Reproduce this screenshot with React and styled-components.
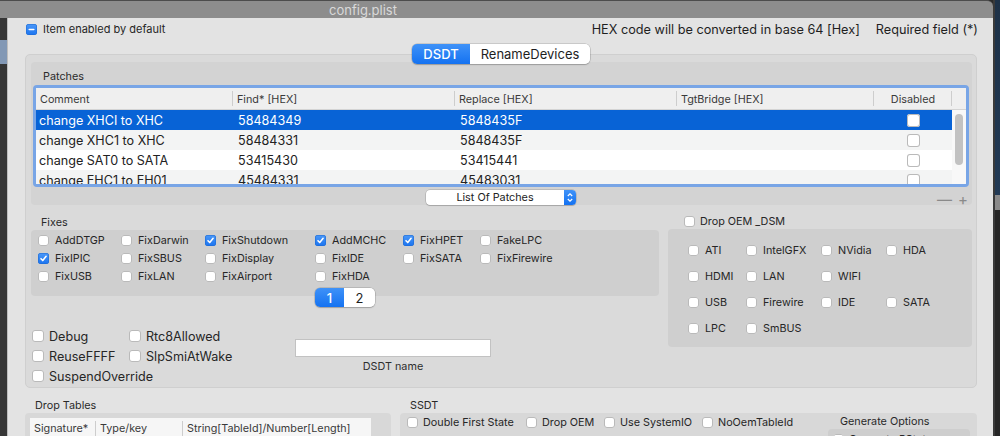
import React from 'react';
import styled, { createGlobalStyle } from 'styled-components';

const GlobalStyle = createGlobalStyle`
  html, body {
    margin: 0;
    padding: 0;
    background: #2a2a2a;
  }
  body {
    font-family: Inter, "Liberation Sans", Arial, sans-serif;
    color: #262626;
  }
`;

const Screen = styled.div`
  width: 1000px;
  height: 436px;
  overflow: hidden;
  display: flex;
`;

const Main = styled.div`
  width: 993px;
  display: flex;
  flex-direction: column;
`;

const RightStrip = styled.div`
  flex: 1;
  border-left: 2px solid #3a3a3a;
  background: linear-gradient(#1d3147 0, #223a55 195px, #8a8a8a 195px, #8a8a8a 210px, #262626 210px);
`;

const TitleBar = styled.div`
  height: 18px;
  flex: none;
  display: flex;
  align-items: center;
  justify-content: center;
  padding-right: 267px;
  background: #8d8d8d;
  border-top: 1px solid #4c4c4c;
  border-top-right-radius: 6px;
  box-sizing: border-box;
  color: #d9d9d9;
  font-size: 13px;
`;

const Body = styled.div`
  flex: 1;
  display: flex;
  min-height: 0;
`;

const LeftStrip = styled.div`
  width: 7px;
  flex: none;
  background: linear-gradient(#363636 0, #363636 22px, #8298b5 22px, #8298b5 46px, #363636 46px);
`;

const Sheet = styled.div`
  flex: 1;
  background: #e3e3e3;
  border-left: 1px solid #bdbdbd;
  display: flex;
  flex-direction: column;
  min-width: 0;
`;

const TopRow = styled.div`
  height: 22px;
  flex: none;
  display: flex;
  align-items: center;
  justify-content: space-between;
  padding: 0 15px 0 18px;
`;

const Hints = styled.div`
  display: flex;
  gap: 16px;
  font-size: 12.7px;
  color: #1f1f1f;
`;

const TabArea = styled.div`
  margin: 4px 0 0 17px;
  width: 952px;
  display: flex;
  flex-direction: column;
  align-items: center;
`;

const Segmented = styled.div`
  display: flex;
  height: ${p => p.$h}px;
  border-radius: 5px;
  overflow: hidden;
  box-shadow: 0 0 0 0.5px rgba(0, 0, 0, 0.22), 0 1px 1.5px rgba(0, 0, 0, 0.18);
  position: relative;
  z-index: 1;
  flex: none;
`;

const Segment = styled.div`
  width: ${p => p.$w}px;
  display: flex;
  align-items: center;
  justify-content: center;
  font-size: 13px;
  color: ${p => (p.$active ? '#fff' : '#1e1e1e')};
  background: ${p => (p.$active ? 'linear-gradient(#3f92f8, #1472f1)' : '#fff')};
  font-weight: ${p => (p.$active ? 500 : 400)};
`;

const TabBox = styled.div`
  margin-top: -10px;
  width: 952px;
  height: 334px;
  box-sizing: border-box;
  background: #dadada;
  border: 1px solid #cfcfcf;
  border-radius: 5px;
  padding: 7px 4px 0 5px;
  display: flex;
  flex-direction: column;
`;

const PatchesBox = styled.div`
  height: 143px;
  flex: none;
  background: #d3d3d3;
  border-radius: 4px;
  padding: 0 3px 0 2px;
  display: flex;
  flex-direction: column;
`;

const GroupLabel = styled.div`
  font-size: 10.8px;
  line-height: 13px;
  color: #2a2a2a;
  padding-left: ${p => p.$indent}px;
  margin: ${p => p.$m || 0};
`;

const TableFrame = styled.div`
  height: 102px;
  flex: none;
  box-sizing: border-box;
  border: 3px solid #78a5e6;
  border-radius: 4px;
  background: #fff;
  overflow: hidden;
`;

const HeaderRow = styled.div`
  display: grid;
  grid-template-columns: 197px 222px 222px 197px 78px 14px;
  height: 22px;
  background: #efefef;
  border-bottom: 1px solid #d4d4d4;
  box-sizing: border-box;
`;

const HeadCell = styled.div`
  font-size: 10.8px;
  color: #3a3a3a;
  display: flex;
  align-items: center;
  padding-top: 1px;
  justify-content: ${p => (p.$center ? 'center' : 'flex-start')};
  padding-left: ${p => (p.$center ? 0 : 4)}px;
  background: ${p => (p.$last ? 'none' : 'linear-gradient(#cdcdcd, #cdcdcd) right center / 1px 15px no-repeat')};
`;

const TableBody = styled.div`
  display: flex;
`;

const RowList = styled.div`
  width: 916px;
  display: flex;
  flex-direction: column;
`;

const Row = styled.div`
  display: grid;
  grid-template-columns: 197px 222px 222px 197px 78px;
  height: 20px;
  flex: none;
  align-items: center;
  font-size: 12.6px;
  color: ${p => (p.$sel ? '#fff' : '#222')};
  background: ${p => (p.$sel ? '#0863d6' : p.$alt ? '#f3f4f4' : '#fff')};
`;

const Cell = styled.div`
  padding-left: ${p => p.$pad}px;
  white-space: nowrap;
  display: flex;
  justify-content: ${p => (p.$center ? 'center' : 'flex-start')};
`;

const ScrollTrack = styled.div`
  width: 14px;
  background: #f8f8f8;
  padding: 4px 3px 0;
  box-sizing: border-box;
`;

const Thumb = styled.div`
  width: 8px;
  height: 51px;
  border-radius: 4px;
  background: #c2c2c2;
`;

const PopupRow = styled.div`
  display: grid;
  grid-template-columns: 1fr auto 1fr;
  align-items: center;
  margin-top: 1px;
`;

const Popup = styled.div`
  width: 150px;
  height: 15px;
  display: flex;
  background: #fff;
  border-radius: 4px;
  overflow: hidden;
  box-shadow: 0 0 0 0.5px rgba(0, 0, 0, 0.22), 0 1px 1px rgba(0, 0, 0, 0.15);
`;

const PopupText = styled.div`
  flex: 1;
  font-size: 10.8px;
  display: flex;
  align-items: center;
  justify-content: center;
  color: #222;
`;

const Stepper = styled.div`
  width: 12px;
  background: linear-gradient(#3f92f8, #1472f1);
  display: flex;
  align-items: center;
  justify-content: center;
`;

const PlusMinus = styled.div`
  justify-self: end;
  display: flex;
  gap: 6px;
  margin: 6px 1px 0 0;
  color: #8a8a8a;
  font-size: 15px;
  line-height: 12px;
`;

const Lower = styled.div`
  display: grid;
  grid-template-columns: 628px 304px;
  column-gap: 9px;
  padding-top: 9px;
`;

const Column = styled.div`
  display: flex;
  flex-direction: column;
`;

const FixesBox = styled.div`
  height: 66px;
  box-sizing: border-box;
  background: #cfcfcf;
  border-radius: 4px;
  padding: 1px 0 0 7px;
  display: grid;
  grid-template-columns: 83px 84px 110px 88px 77px auto;
  grid-auto-rows: 18px;
  align-items: center;
`;

const Pager = styled(Segmented)`
  align-self: center;
  margin-top: -8px;
`;

const DebugRow = styled.div`
  display: grid;
  grid-template-columns: 264px 196px;
  margin-top: 19px;
`;

const DebugGrid = styled.div`
  display: grid;
  grid-template-columns: 97px auto;
  grid-auto-rows: 20px;
  align-items: center;
  padding-left: 1px;
`;

const NameBlock = styled.div`
  display: flex;
  flex-direction: column;
  align-items: center;
  margin-top: 13px;
`;

const NameField = styled.div`
  width: 196px;
  height: 18px;
  box-sizing: border-box;
  background: #fff;
  border: 1px solid #c2c2c2;
`;

const NameLabel = styled.div`
  font-size: 10.8px;
  color: #2e2e2e;
  margin-top: 3px;
`;

const DsmHead = styled.div`
  height: 14px;
  display: flex;
  align-items: center;
  padding-left: 16px;
  margin-bottom: 1px;
`;

const DsmBox = styled.div`
  height: 118px;
  box-sizing: border-box;
  background: #cfcfcf;
  border-radius: 4px;
  padding: 8px 0 0 20px;
  display: grid;
  grid-template-columns: 58px 75px 65px auto;
  grid-auto-rows: 26px;
  align-items: center;
`;

const Bottom = styled.div`
  display: grid;
  grid-template-columns: 366px 577px;
  column-gap: 9px;
  margin: 11px 0 0 17px;
`;

const BottomBox = styled.div`
  height: 40px;
  background: #d8d8d8;
  border-radius: 4px;
  box-sizing: border-box;
  padding: ${p => p.$pad};
  display: ${p => (p.$grid ? 'grid' : 'block')};
  grid-template-columns: 1fr 142px;
  column-gap: 8px;
`;

const DropTable = styled.div`
  background: #fff;
  height: 40px;
`;

const DropHead = styled.div`
  display: grid;
  grid-template-columns: 66px 87px auto;
  height: 20px;
  background: #f6f6f6;
`;

const SsdtRow = styled.div`
  display: grid;
  grid-template-columns: 119px 78px 98px auto;
  height: 18px;
  align-items: center;
  padding: 0 0 0 7px;
`;

const GenCol = styled.div`
  display: flex;
  flex-direction: column;
  padding-top: 2px;
`;

const GenBox = styled.div`
  margin-top: 1px;
  height: 30px;
  background: #cecece;
  border-radius: 4px;
  padding: 4px 0 0 5px;
`;

const Box = styled.span`
  flex: none;
  width: ${p => p.$size}px;
  height: ${p => p.$size}px;
  box-sizing: border-box;
  border-radius: 3px;
  display: flex;
  align-items: center;
  justify-content: center;
  background: ${p => (p.$on ? 'linear-gradient(#4b98f8, #1b74f0)' : '#fff')};
  box-shadow: ${p => (p.$on ? 'inset 0 0 0 0.5px #1d68cf' : 'inset 0 0 0 1px #bababa')};
`;

const Item = styled.div`
  display: flex;
  align-items: center;
  gap: ${p => p.$gap}px;
  font-size: ${p => p.$fs}px;
  color: #262626;
  white-space: nowrap;
`;

function Checkbox({ on, dash, size = 11 }) {
  return (
    <Box $on={on || dash} $size={size}>
      {on && (
        <svg width={size - 2} height={size - 2} viewBox="0 0 10 10">
          <polyline points="2.2,5.2 4.2,7.3 7.9,2.6" fill="none" stroke="#fff" strokeWidth="1.7" strokeLinecap="round" strokeLinejoin="round" />
        </svg>
      )}
      {dash && (
        <svg width={size - 2} height={size - 2} viewBox="0 0 10 10">
          <line x1="2.5" y1="5" x2="7.5" y2="5" stroke="#fff" strokeWidth="1.8" strokeLinecap="round" />
        </svg>
      )}
    </Box>
  );
}

function Check({ label, on, size = 11, fs = 10.8, gap = 5 }) {
  return (
    <Item $gap={gap} $fs={fs}>
      <Checkbox on={on} size={size} />
      {label}
    </Item>
  );
}

const patches = [
  ['change XHCI to XHC', '58484349', '5848435F'],
  ['change XHC1 to XHC', '58484331', '5848435F'],
  ['change SAT0 to SATA', '53415430', '53415441'],
  ['change EHC1 to EH01', '45484331', '45483031'],
];

const fixes = [
  ['AddDTGP'], ['FixDarwin'], ['FixShutdown', true], ['AddMCHC', true], ['FixHPET', true], ['FakeLPC'],
  ['FixIPIC', true], ['FixSBUS'], ['FixDisplay'], ['FixIDE'], ['FixSATA'], ['FixFirewire'],
  ['FixUSB'], ['FixLAN'], ['FixAirport'], ['FixHDA'],
];

const dsm = ['ATI', 'IntelGFX', 'NVidia', 'HDA', 'HDMI', 'LAN', 'WIFI', null, 'USB', 'Firewire', 'IDE', 'SATA', 'LPC', 'SmBUS'];

export default function App() {
  return (
    <Screen>
      <GlobalStyle />
      <Main>
        <TitleBar>config.plist</TitleBar>
        <Body>
          <LeftStrip />
          <Sheet>
            <TopRow>
              <Item $gap={6} $fs={11}>
                <Checkbox dash size={11} />
                Item enabled by default
              </Item>
              <Hints>
                <span>HEX code will be converted in base 64 [Hex]</span>
                <span>Required field (*)</span>
              </Hints>
            </TopRow>

            <TabArea>
              <Segmented $h={20}>
                <Segment $w={58} $active>DSDT</Segment>
                <Segment $w={120}>RenameDevices</Segment>
              </Segmented>
              <TabBox>
                <PatchesBox>
                  <GroupLabel $indent={10} $m="8px 0 2px">Patches</GroupLabel>
                  <TableFrame>
                    <HeaderRow>
                      <HeadCell>Comment</HeadCell>
                      <HeadCell>Find* [HEX]</HeadCell>
                      <HeadCell>Replace [HEX]</HeadCell>
                      <HeadCell>TgtBridge [HEX]</HeadCell>
                      <HeadCell $center>Disabled</HeadCell>
                      <HeadCell $last />
                    </HeaderRow>
                    <TableBody>
                      <RowList>
                        {patches.map((p, i) => (
                          <Row key={p[0]} $sel={i === 0} $alt={i % 2 === 1}>
                            <Cell $pad={3}>{p[0]}</Cell>
                            <Cell $pad={5}>{p[1]}</Cell>
                            <Cell $pad={5}>{p[2]}</Cell>
                            <Cell />
                            <Cell $center>
                              <Checkbox size={13} />
                            </Cell>
                          </Row>
                        ))}
                      </RowList>
                      <ScrollTrack>
                        <Thumb />
                      </ScrollTrack>
                    </TableBody>
                  </TableFrame>
                  <PopupRow>
                    <span />
                    <Popup>
                      <PopupText>List Of Patches</PopupText>
                      <Stepper>
                        <svg width="8" height="11" viewBox="0 0 8 11">
                          <polyline points="1.8,4 4,1.8 6.2,4" fill="none" stroke="#fff" strokeWidth="1.2" />
                          <polyline points="1.8,7 4,9.2 6.2,7" fill="none" stroke="#fff" strokeWidth="1.2" />
                        </svg>
                      </Stepper>
                    </Popup>
                    <PlusMinus>
                      <span>—</span>
                      <span>+</span>
                    </PlusMinus>
                  </PopupRow>
                </PatchesBox>

                <Lower>
                  <Column>
                    <GroupLabel $indent={10} $m="2px 0 1px">Fixes</GroupLabel>
                    <FixesBox>
                      {fixes.map(([name, on]) => (
                        <Check key={name} label={name} on={on} gap={6} />
                      ))}
                    </FixesBox>
                    <Pager $h={19}>
                      <Segment $w={29} $active>1</Segment>
                      <Segment $w={31}>2</Segment>
                    </Pager>
                    <DebugRow>
                      <DebugGrid>
                        <Check label="Debug" size={12} fs={12.6} />
                        <Check label="Rtc8Allowed" size={12} fs={12.6} />
                        <Check label="ReuseFFFF" size={12} fs={12.6} />
                        <Check label="SlpSmiAtWake" size={12} fs={12.6} />
                        <Check label="SuspendOverride" size={12} fs={12.6} />
                      </DebugGrid>
                      <NameBlock>
                        <NameField />
                        <NameLabel>DSDT name</NameLabel>
                      </NameBlock>
                    </DebugRow>
                  </Column>

                  <Column>
                    <DsmHead>
                      <Check label="Drop OEM _DSM" />
                    </DsmHead>
                    <DsmBox>
                      {dsm.map((name, i) => (name ? <Check key={name} label={name} gap={6} /> : <span key={i} />))}
                    </DsmBox>
                  </Column>
                </Lower>
              </TabBox>
            </TabArea>

            <Bottom>
              <Column>
                <GroupLabel $indent={10} $m="0 0 1px">Drop Tables</GroupLabel>
                <BottomBox $pad="5px 20px 0 5px">
                  <DropTable>
                    <DropHead>
                      <HeadCell>Signature*</HeadCell>
                      <HeadCell>Type/key</HeadCell>
                      <HeadCell $last>String[TableId]/Number[Length]</HeadCell>
                    </DropHead>
                  </DropTable>
                </BottomBox>
              </Column>
              <Column>
                <GroupLabel $indent={10} $m="0 0 1px">SSDT</GroupLabel>
                <BottomBox $grid $pad="0 7px 0 0">
                  <SsdtRow>
                    <Check label="Double First State" />
                    <Check label="Drop OEM" />
                    <Check label="Use SystemIO" />
                    <Check label="NoOemTableId" />
                  </SsdtRow>
                  <GenCol>
                    <GroupLabel $indent={12}>Generate Options</GroupLabel>
                    <GenBox>
                      <Check label="Generate PStates" />
                    </GenBox>
                  </GenCol>
                </BottomBox>
              </Column>
            </Bottom>
          </Sheet>
        </Body>
      </Main>
      <RightStrip />
    </Screen>
  );
}
